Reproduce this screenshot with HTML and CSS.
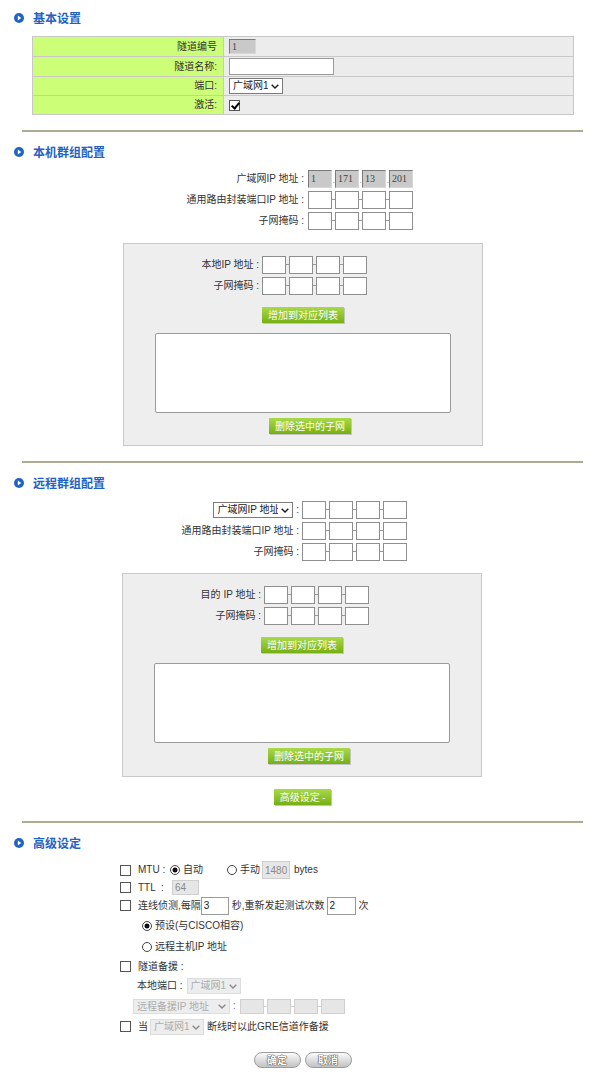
FILE: index.html
```html
<!DOCTYPE html>
<html lang="zh-CN">
<head>
<meta charset="UTF-8">
<meta name="viewport" content="width=device-width, initial-scale=1.0">
<title>GRE 隧道设置</title>
<link rel="stylesheet" href="styles.css">
</head>
<body>

<!-- 基本设置 -->
<div class="title"><svg class="bullet" viewBox="0 0 10 10"><circle cx="5" cy="5" r="5" fill="#1f63c6"/><path d="M3.8 2.5 L7.3 5 L3.8 7.5 Z" fill="#fff"/></svg>基本设置</div>
<table class="basic">
  <tr class="r1"><td class="lbl">隧道编号</td><td><input class="tunnelNo" type="text" value="1" disabled></td></tr>
  <tr class="r2"><td class="lbl">隧道名称:</td><td><input class="tunnelName" type="text"></td></tr>
  <tr class="r3"><td class="lbl">端口:</td><td><span class="selBox"><select class="sel port"><option>广域网1</option></select><svg class="caret" viewBox="0 0 8 5"><path d="M0.7 0.7 L4 4 L7.3 0.7"/></svg></span></td></tr>
  <tr class="r4"><td class="lbl">激活:</td><td><input class="chk" type="checkbox" checked></td></tr>
</table>

<div class="sep"></div>

<!-- 本机群组配置 -->
<div class="title"><svg class="bullet" viewBox="0 0 10 10"><circle cx="5" cy="5" r="5" fill="#1f63c6"/><path d="M3.8 2.5 L7.3 5 L3.8 7.5 Z" fill="#fff"/></svg>本机群组配置</div>
<div class="ipRows localGroup">
  <div class="ipRow"><span class="lbl">广域网IP 地址 :</span><span class="ip off"><input value="1" disabled><i class="dot">.</i><input value="171" disabled><i class="dot">.</i><input value="13" disabled><i class="dot">.</i><input value="201" disabled></span></div>
  <div class="ipRow"><span class="lbl">通用路由封装端口IP 地址 :</span><span class="ip"><input><i></i><input><i></i><input><i></i><input></span></div>
  <div class="ipRow"><span class="lbl">子网掩码 :</span><span class="ip"><input><i></i><input><i></i><input><i></i><input></span></div>
</div>

<div class="box localBox">
  <div class="ipRow"><span class="lbl">本地IP 地址 :</span><span class="ip"><input><i></i><input><i></i><input><i></i><input></span></div>
  <div class="ipRow"><span class="lbl">子网掩码 :</span><span class="ip"><input><i></i><input><i></i><input><i></i><input></span></div>
  <div class="btnRow addRow"><button class="greenBtn">增加到对应列表</button></div>
  <select class="list" multiple></select>
  <div class="btnRow delRow"><button class="greenBtn">删除选中的子网</button></div>
</div>

<div class="sep"></div>

<!-- 远程群组配置 -->
<div class="title"><svg class="bullet" viewBox="0 0 10 10"><circle cx="5" cy="5" r="5" fill="#1f63c6"/><path d="M3.8 2.5 L7.3 5 L3.8 7.5 Z" fill="#fff"/></svg>远程群组配置</div>
<div class="ipRows remoteGroup">
  <div class="ipRow"><span class="lbl"><span class="selBox"><select class="sel wanType"><option>广域网IP 地址</option></select><svg class="caret" viewBox="0 0 8 5"><path d="M0.7 0.7 L4 4 L7.3 0.7"/></svg></span> :</span><span class="ip"><input><i></i><input><i></i><input><i></i><input></span></div>
  <div class="ipRow"><span class="lbl">通用路由封装端口IP 地址 :</span><span class="ip"><input><i></i><input><i></i><input><i></i><input></span></div>
  <div class="ipRow"><span class="lbl">子网掩码 :</span><span class="ip"><input><i></i><input><i></i><input><i></i><input></span></div>
</div>

<div class="box remoteBox">
  <div class="ipRow"><span class="lbl">目的 IP 地址 :</span><span class="ip"><input><i></i><input><i></i><input><i></i><input></span></div>
  <div class="ipRow"><span class="lbl">子网掩码 :</span><span class="ip"><input><i></i><input><i></i><input><i></i><input></span></div>
  <div class="btnRow addRow"><button class="greenBtn">增加到对应列表</button></div>
  <select class="list" multiple></select>
  <div class="btnRow delRow"><button class="greenBtn">删除选中的子网</button></div>
</div>

<div class="btnRow advToggle"><button class="greenBtn">高级设定 -</button></div>

<div class="sep"></div>

<!-- 高级设定 -->
<div class="title"><svg class="bullet" viewBox="0 0 10 10"><circle cx="5" cy="5" r="5" fill="#1f63c6"/><path d="M3.8 2.5 L7.3 5 L3.8 7.5 Z" fill="#fff"/></svg>高级设定</div>
<div class="adv">
  <div class="advRow a1">
    <input class="chk" type="checkbox"><span class="key">MTU :</span>
    <input class="rad" type="radio" name="mtu" checked><span>自动</span>
    <input class="rad manual" type="radio" name="mtu"><span>手动</span>
    <input class="num mtuVal" value="1480" disabled><span class="unit">bytes</span>
  </div>
  <div class="advRow a2">
    <input class="chk" type="checkbox"><span class="key">TTL &nbsp;:</span>
    <input class="num ttlVal" value="64" disabled>
  </div>
  <div class="advRow a3">
    <input class="chk" type="checkbox"><span>连线侦测,每隔</span><input class="num live interval" value="3"><span class="after">秒,重新发起测试次数</span><input class="num live retry" value="2"><span class="after">次</span>
  </div>
  <div class="advRow a4 indent"><input class="rad" type="radio" name="detect" checked><span>预设(与CISCO相容)</span></div>
  <div class="advRow a5 indent"><input class="rad" type="radio" name="detect"><span>远程主机IP 地址</span></div>
  <div class="advRow a6"><input class="chk" type="checkbox"><span>隧道备援 :</span></div>
  <div class="advRow a7"><span class="subKey">本地端口 :</span><span class="selBox off"><select class="sel port" disabled><option>广域网1</option></select><svg class="caret" viewBox="0 0 8 5"><path d="M0.7 0.7 L4 4 L7.3 0.7"/></svg></span></div>
  <div class="advRow a8">
    <span class="selBox off backup"><select class="sel backupType" disabled><option>远程备援IP 地址</option></select><svg class="caret" viewBox="0 0 8 5"><path d="M0.7 0.7 L4 4 L7.3 0.7"/></svg></span><span class="colon">:</span>
    <span class="ip off small"><input disabled><i></i><input disabled><i></i><input disabled><i></i><input disabled></span>
  </div>
  <div class="advRow a9">
    <input class="chk" type="checkbox"><span>当</span><span class="selBox off when"><select class="sel port" disabled><option>广域网1</option></select><svg class="caret" viewBox="0 0 8 5"><path d="M0.7 0.7 L4 4 L7.3 0.7"/></svg></span><span class="after">断线时以此GRE信道作备援</span>
  </div>
</div>

<div class="btnRow actions">
  <button class="pill">确定</button>
  <button class="pill">取消</button>
</div>

</body>
</html>
```

FILE: styles.css
```css
/* page */
body {
  margin: 0;
  padding: 8px 0 14px;
  width: 600px;
  background: #fff;
  color: #333;
  font-family: "Liberation Sans", "Noto Sans CJK SC", sans-serif;
  font-size: 10px;
  line-height: 14px;
}

input, select, button {
  font-family: "Liberation Sans", "Noto Sans CJK SC", sans-serif;
  font-size: 10px;
  margin: 0;
  box-sizing: border-box;
}

/* section headings */
.title {
  display: flex;
  align-items: center;
  height: 20px;
  padding-left: 14px;
  color: #1f61c4;
  font-family: "Noto Sans CJK SC", sans-serif;
  font-size: 12px;
  font-weight: bold;
}
.title .bullet {
  width: 10px;
  height: 10px;
  margin-right: 9px;
}

.sep {
  height: 2px;
  background: #acab94;
  margin: 15px 17px 10px 22px;
}

/* basic settings table */
.basic {
  margin: 8px 0 0 32px;
  width: 542px;
  border-collapse: collapse;
}
.basic td {
  border: 1px solid #c8c8c8;
  background: #ececec;
  padding: 0 5px;
  height: 18px;
}
.basic tr.r1 td, .basic tr.r2 td { height: 19px; }
.basic td.lbl {
  width: 179px;
  background: #ccff77;
  text-align: right;
  padding-right: 6px;
}
.basic input, .basic .selBox { vertical-align: middle; }
.tunnelNo {
  width: 27px;
  height: 15px;
  padding: 0 2px;
  background: #c9c9c9;
  color: #444;
  border: 1px solid;
  border-color: #7a7a7a #d8d8d8 #d8d8d8 #7a7a7a;
  font-family: "Liberation Serif", serif;
}
.tunnelName {
  width: 105px;
  height: 17px;
  border: 1px solid #9a9a9a;
  background: #fff;
}

/* selects, drawn flat with their own caret */
.selBox {
  position: relative;
  display: inline-flex;
  vertical-align: middle;
}
.sel {
  -webkit-appearance: none;
  appearance: none;
  height: 16px;
  padding: 0 14px 0 3px;
  border: 1px solid #7a7a7a;
  border-radius: 0;
  background: #fff;
  color: #222;
  line-height: 14px;
}
.sel.port { width: 54px; }
.caret {
  position: absolute;
  right: 4px;
  top: 50%;
  width: 8px;
  height: 5px;
  margin-top: -2px;
  fill: none;
  stroke: #1a1a1a;
  stroke-width: 1.4;
  pointer-events: none;
}
.selBox.off .sel {
  background: #e6e6e6;
  border-color: #cfcfcf;
  color: #8a8a8a;
}
.selBox.off .caret { stroke: #8a8a8a; }

/* checkbox / radio */
.chk {
  -webkit-appearance: none;
  appearance: none;
  position: relative;
  width: 11px;
  height: 11px;
  border: 1px solid #555;
  background: #fff;
  flex: none;
}
.chk:checked::after {
  content: "";
  position: absolute;
  left: 3px;
  top: 0;
  width: 3px;
  height: 6px;
  border: solid #000;
  border-width: 0 2px 2px 0;
  transform: rotate(40deg);
}
.rad {
  -webkit-appearance: none;
  appearance: none;
  width: 10px;
  height: 10px;
  border: 1px solid #444;
  border-radius: 50%;
  background: #fff;
  margin-right: 3px;
  flex: none;
}
.rad:checked {
  background: radial-gradient(circle, #111 0 2.2px, #fff 2.8px);
}

/* ip address fields */
.ipRows { margin-top: 6px; }
.ipRow {
  display: flex;
  align-items: center;
  height: 21px;
}
.ipRow .lbl {
  flex: none;
  box-sizing: border-box;
  text-align: right;
  padding-right: 4px;
  white-space: nowrap;
}
.localGroup .lbl { width: 308px; }
.remoteGroup .lbl { width: 302px; padding-right: 3px; }
.localBox .lbl { width: 138px; padding-right: 3px; }
.remoteBox .lbl { width: 141px; padding-right: 3px; }
.wanType { width: 80px; }

.ip {
  display: flex;
  align-items: center;
}
.ip input {
  width: 24px;
  height: 18px;
  padding: 0 2px;
  border: 1px solid #8e8e8e;
  background: #fff;
  font-family: "Liberation Serif", serif;
  color: #333;
}
.ip i {
  width: 3px;
  height: 1px;
  background: #9a9a9a;
}
.ip.off input {
  background: #c9c9c9;
  border-color: #7a7a7a #d8d8d8 #d8d8d8 #7a7a7a;
  color: #444;
}
.ip i.dot {
  height: 18px;
  background: none;
  font-style: normal;
  line-height: 22px;
  color: #777;
  font-size: 8px;
  text-align: center;
}
.ip.small input {
  width: 24px;
  height: 15px;
  background: #e6e6e6;
  border: 1px solid #d0d0d0;
}
.ip.small i { background: #d0d0d0; }

/* grey group boxes */
.box {
  width: 360px;
  box-sizing: border-box;
  margin: 12px 0 0 123px;
  padding: 10px 0 11px;
  background: #eeeeee;
  border: 1px solid #c9c9c9;
}
.remoteBox {
  margin: 11px 0 0 122px;
  padding-bottom: 12px;
}
.list {
  display: block;
  width: 296px;
  height: 80px;
  margin: 10px auto 0;
  border: 1px solid #9a9a9a;
  background: #fff;
}

/* buttons */
.btnRow {
  display: flex;
  justify-content: center;
}
.addRow { margin-top: 11px; }
.delRow { margin-top: 5px; padding-left: 14px; }
.advToggle { margin: 12px 17px 0 22px; }
.advToggle + .sep { margin-top: 16px; }
.greenBtn {
  height: 16px;
  padding: 0 6px;
  border: 0;
  background: linear-gradient(#a9d94a, #76b014);
  color: #fff;
  box-shadow: 1px 1px 0 #c4c4c4;
  font-family: "Noto Sans CJK SC", sans-serif;
  line-height: 16px;
}

/* advanced settings */
.adv {
  margin-top: 8px;
  padding-left: 120px;
}
.advRow {
  display: flex;
  align-items: center;
  white-space: nowrap;
}
.advRow .chk { margin-right: 7px; }
.a1 { height: 18px; }
.a2 { height: 17px; }
.a3 { height: 19px; }
.a4 { height: 22px; }
.a5 { height: 20px; }
.a6 { height: 19px; }
.a7 { height: 19px; }
.a8 { height: 22px; }
.a9 { height: 19px; }
.key { width: 32px; }
.a2 .key { width: 34px; }
.rad.manual { margin-left: 24px; }
.num {
  height: 18px;
  padding: 0 2px;
  border: 1px solid #9a9a9a;
  background: #fff;
  color: #222;
}
.num:disabled {
  background: #e6e6e6;
  border-color: #cfcfcf;
  color: #8a8a8a;
}
.mtuVal { width: 28px; margin-left: 2px; }
.unit { margin-left: 4px; }
.ttlVal { width: 27px; height: 15px; }
.interval { width: 28px; }
.retry { width: 29px; margin-left: 2px; }
.after { margin-left: 3px; }
.indent { padding-left: 22px; }
.subKey { margin-left: 17px; margin-right: 4px; }
.backup { margin-left: 13px; }
.backupType { width: 97px; height: 15px; }
.colon { margin: 0 4px 0 3px; color: #777; }
.when { margin-left: 2px; }

.actions {
  margin: 16px 0 0 22px;
  width: 561px;
  gap: 4px;
}
.pill {
  width: 47px;
  height: 16px;
  padding: 0;
  border: 1px solid #9c9c9c;
  border-radius: 8px;
  background: linear-gradient(#fbfbfb, #c2c2c2);
  color: #fff;
  font-family: "Noto Sans CJK SC", sans-serif;
  font-weight: bold;
  line-height: 14px;
  text-shadow: 0 0 1px #444, 0 0 1px #444, 0 0 1px #444;
}
```
